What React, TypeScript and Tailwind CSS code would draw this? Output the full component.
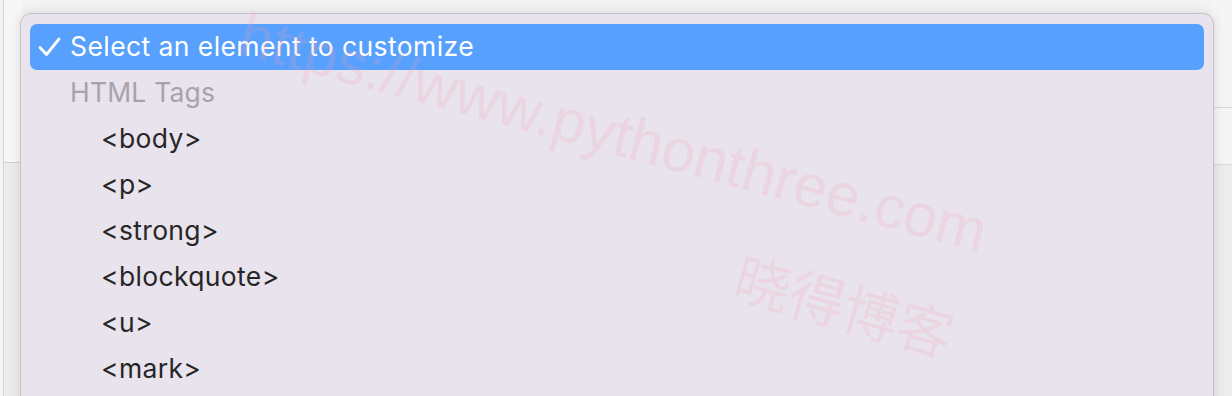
import React from "react";

const items = ["<body>", "<p>", "<strong>", "<blockquote>", "<u>", "<mark>"];

export default function App() {
  return (
    <div
      className="relative w-[1232px] h-[396px] overflow-hidden bg-[#f3f3f3]"
      style={{ fontFamily: "Inter, 'Noto Sans', sans-serif" }}
    >
      {/* background app content */}
      <div className="flex h-full">
        <div className="w-[20px] h-full flex flex-col border-l border-[#d6d6d6] ml-[3px]">
          <div className="h-[163px] border-b border-[#d0d0d0] bg-[#f7f7f7]" />
          <div className="flex-1 bg-[#ececec]" />
        </div>
        <div className="flex-1" />
        <div className="w-[20px] h-full flex flex-col bg-[#f5f5f5]">
          <div className="h-[26px]" />
          <div className="h-[82px] border-b border-[#d8d8d8]" />
          <div className="h-[57px] border-b border-[#d8d8d8]" />
          <div className="flex-1 bg-[#ececec]" />
        </div>
      </div>

      {/* popup menu */}
      <div className="absolute left-[20px] top-[13px] w-[1194px] h-[400px] rounded-t-[11px] bg-[#e8e3ed] border border-[#c4c2c6] shadow-[0_0_12px_rgba(0,0,0,0.12)] px-[9px] pt-[10px] overflow-hidden">
        <div className="flex items-center h-[46px] rounded-[7px] bg-[#57a0fe] text-white text-[26.5px] tracking-[0.42px]">
          <span className="w-[40px] pl-[8px] flex items-center">
            <svg width="23" height="20" viewBox="0 0 23 20" fill="none">
              <path
                d="M2 10.5 L8.5 17.5 L21 2"
                stroke="white"
                strokeWidth="2.8"
                strokeLinecap="round"
                strokeLinejoin="round"
              />
            </svg>
          </span>
          <span>Select an element to customize</span>
        </div>
        <div className="flex items-center h-[46px] pl-[40px] text-[26.5px] tracking-[0.2px] text-[#a7a2ab]">
          HTML Tags
        </div>
        {items.map((t) => (
          <div
            key={t}
            className="flex items-center h-[46px] pl-[71px] text-[26.5px] tracking-[0.35px] text-[#262626]"
          >
            {t}
          </div>
        ))}
      </div>

      {/* watermark */}
      <div
        className="absolute left-[249px] top-[5px] origin-top-left rotate-[15deg] text-[60px] leading-none text-[rgba(245,160,175,0.2)] whitespace-nowrap pointer-events-none"
        style={{ fontFamily: "'Liberation Sans', Arial, sans-serif" }}
      >
        https://www.pythonthree.com
      </div>
      <div
        className="absolute left-[745px] top-[246px] origin-top-left rotate-[16deg] text-[56px] leading-none text-[rgba(245,160,175,0.2)] whitespace-nowrap pointer-events-none"
        style={{ fontFamily: "'Noto Sans CJK SC', sans-serif" }}
      >
        晓得博客
      </div>
    </div>
  );
}
